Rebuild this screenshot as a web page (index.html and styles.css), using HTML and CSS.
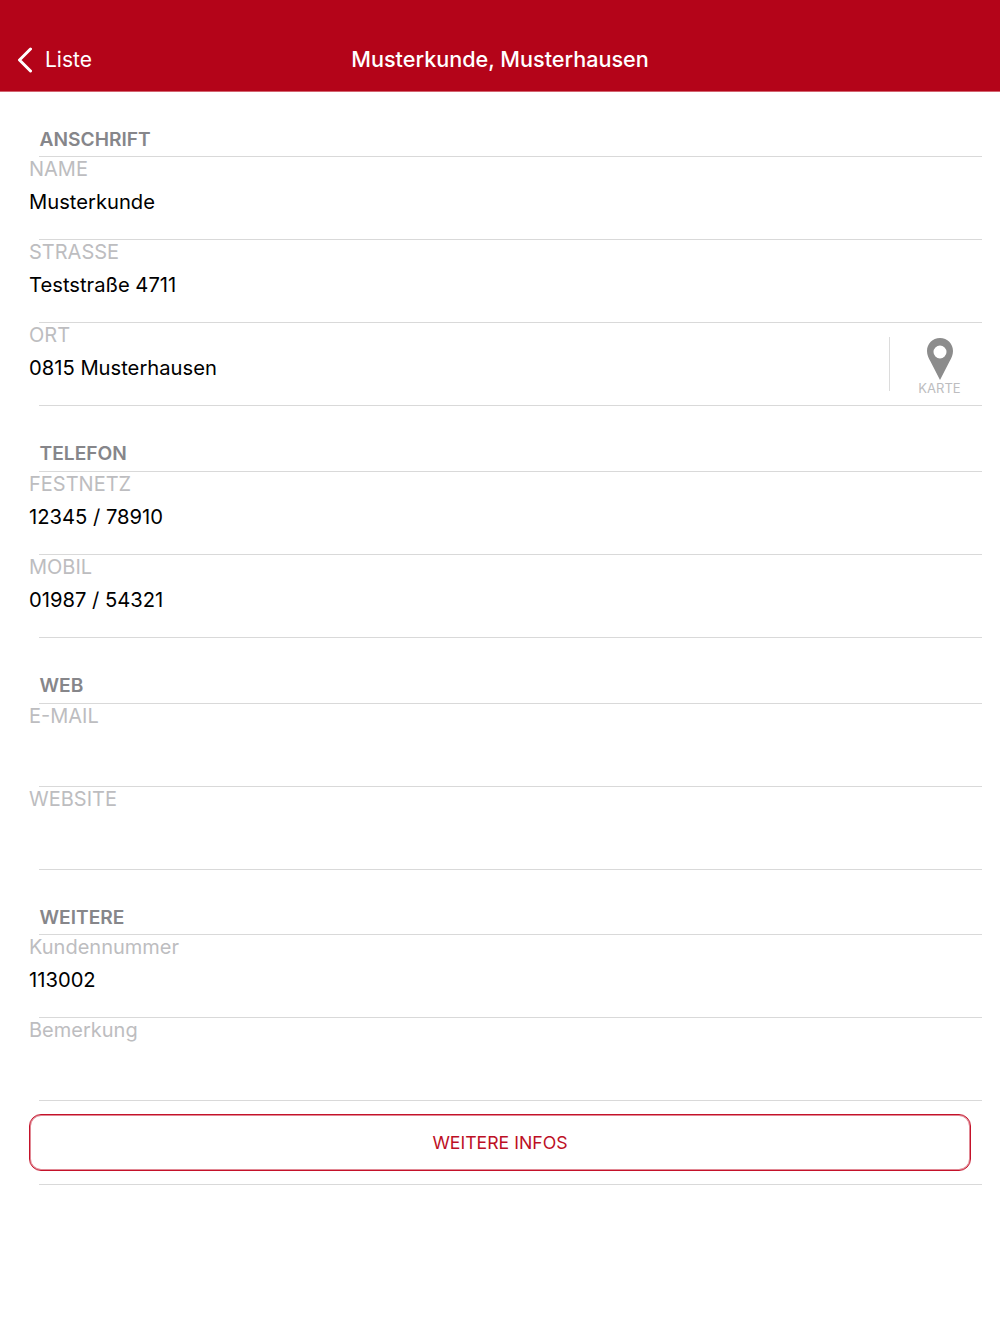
FILE: index.html
```html
<!DOCTYPE html>
<html lang="de">
<head>
    <meta charset="UTF-8">
    <meta name="viewport" content="width=device-width, initial-scale=1.0">
    <title>Musterkunde, Musterhausen</title>
    <link rel="stylesheet" href="styles.css">
</head>
<body>
    <header class="navbar">
        <div class="back">
            <svg class="back-icon" width="16" height="26" viewBox="0 0 16 26"><path d="M14.500 2 L3.500 13 L14.500 24" fill="none" stroke="#fff" stroke-width="3" stroke-linecap="round" stroke-linejoin="round"/></svg>
            <span>Liste</span>
        </div>
        <div class="navbar-title">Musterkunde, Musterhausen</div>
    </header>

    <section>
        <h2 class="section-title compact">ANSCHRIFT</h2>
        <div class="row">
            <div class="row-label">NAME</div>
            <div class="row-value">Musterkunde</div>
        </div>
        <div class="row">
            <div class="row-label">STRASSE</div>
            <div class="row-value">Teststraße 4711</div>
        </div>
        <div class="row row-map">
            <div class="row-text">
                <div class="row-label">ORT</div>
                <div class="row-value">0815 Musterhausen</div>
            </div>
            <div class="map-link">
                <svg width="28" height="43" viewBox="0 0 28 43"><path fill-rule="evenodd" fill="#8c8c8c" d="M14 1 C6.500 1 1 6.800 1 14 C1 18 2.600 21 4.500 24.500 L14 43 L23.500 24.500 C25.400 21 27 18 27 14 C27 6.800 21.500 1 14 1 Z M14 8.500 A6.500 6.500 0 1 1 14 21.500 A6.500 6.500 0 1 1 14 8.500 Z"/></svg>
                <span>KARTE</span>
            </div>
        </div>
    </section>

    <section>
        <h2 class="section-title">TELEFON</h2>
        <div class="row">
            <div class="row-label">FESTNETZ</div>
            <div class="row-value">12345 / 78910</div>
        </div>
        <div class="row">
            <div class="row-label">MOBIL</div>
            <div class="row-value">01987 / 54321</div>
        </div>
    </section>

    <section>
        <h2 class="section-title">WEB</h2>
        <div class="row">
            <div class="row-label">E-MAIL</div>
            <div class="row-value"></div>
        </div>
        <div class="row">
            <div class="row-label">WEBSITE</div>
            <div class="row-value"></div>
        </div>
    </section>

    <section>
        <h2 class="section-title compact">WEITERE</h2>
        <div class="row">
            <div class="row-label">Kundennummer</div>
            <div class="row-value">113002</div>
        </div>
        <div class="row">
            <div class="row-label">Bemerkung</div>
            <div class="row-value"></div>
        </div>
        <div class="row row-button">
            <button class="more-button">WEITERE INFOS</button>
        </div>
    </section>
</body>
</html>
```

FILE: styles.css
```css
body {
    font-family: Inter, 'Liberation Sans', sans-serif;
    margin: 0;
    padding: 0;
    background-color: #fff;
    color: #000;
}
.navbar {
    height: 92px;
    background-color: #b40419;
    border-bottom: 1px solid #d2636f;
    color: #fff;
    display: flex;
    align-items: flex-end;
    justify-content: center;
    position: relative;
    box-sizing: border-box;
    padding-bottom: 18px;
}
.navbar-title {
    font-size: 21.6px;
    font-weight: 500;
    line-height: 28px;
}
.back {
    position: absolute;
    left: 16px;
    bottom: 17px;
    display: flex;
    align-items: center;
    gap: 13px;
    font-size: 21px;
    line-height: 28px;
}
.back-icon {
    display: block;
}
.section-title {
    margin: 0 18px 0 39px;
    height: 66px;
    box-sizing: border-box;
    padding: 35px 0 0 0.5px;
    border-bottom: 1px solid #d9d9d9;
    font-size: 19.2px;
    line-height: 24px;
    font-weight: 600;
    color: #86868a;
}
.section-title.compact {
    height: 65px;
}
.row {
    margin: 0 18px 0 39px;
    height: 83px;
    box-sizing: border-box;
    border-bottom: 1px solid #d9d9d9;
}
.row-label {
    margin-left: -10px;
    font-size: 20px;
    line-height: 24px;
    color: #bdbdc0;
}
.row-value {
    margin-left: -10px;
    margin-top: 8px;
    font-size: 20.2px;
    line-height: 26px;
    color: #000;
}
.row-map {
    display: flex;
    justify-content: space-between;
}
.map-link {
    width: 93px;
    height: 54px;
    margin-top: 14px;
    padding-left: 7px;
    box-sizing: border-box;
    border-left: 1px solid #dcdcdc;
    display: flex;
    flex-direction: column;
    align-items: center;
    color: #bdbdc0;
    font-size: 13px;
    line-height: 16px;
}
.map-link svg {
    display: block;
    flex-shrink: 0;
}
.row-button {
    height: 84px;
    padding-top: 13px;
}
.more-button {
    display: block;
    margin-left: -10px;
    width: 942px;
    height: 57px;
    border: 1px solid #c4122a;
    box-shadow: inset 0 0 0 1px rgba(196, 18, 42, 0.5);
    border-radius: 12px;
    background-color: #fff;
    color: #bd0f25;
    font-family: inherit;
    font-size: 17.7px;
}
```
